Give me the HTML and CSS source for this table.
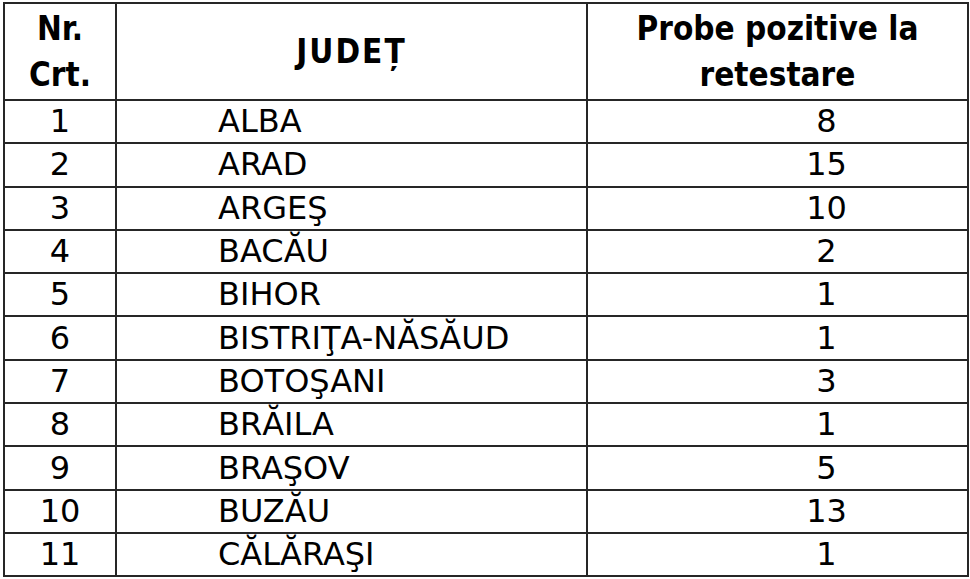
FILE: index.html
```html
<!DOCTYPE html>
<html lang="ro">
<head>
<meta charset="utf-8">
<link rel="stylesheet" href="styles.css">
</head>
<body>
<table class="tbl">
  <colgroup>
    <col class="c-nr">
    <col class="c-jud">
    <col class="c-prob">
  </colgroup>
  <thead>
    <tr class="head">
      <th class="h-nr">Nr.<br>Crt.</th>
      <th class="h-jud">JUDEȚ</th>
      <th class="h-prob">Probe pozitive la<br>retestare</th>
    </tr>
  </thead>
  <tbody>
    <tr><td class="nr">1</td><td class="jud">ALBA</td><td class="val">8</td></tr>
    <tr><td class="nr">2</td><td class="jud">ARAD</td><td class="val">15</td></tr>
    <tr><td class="nr">3</td><td class="jud">ARGEŞ</td><td class="val">10</td></tr>
    <tr><td class="nr">4</td><td class="jud">BACĂU</td><td class="val">2</td></tr>
    <tr><td class="nr">5</td><td class="jud">BIHOR</td><td class="val">1</td></tr>
    <tr><td class="nr">6</td><td class="jud">BISTRIŢA-NĂSĂUD</td><td class="val">1</td></tr>
    <tr><td class="nr">7</td><td class="jud">BOTOŞANI</td><td class="val">3</td></tr>
    <tr><td class="nr">8</td><td class="jud">BRĂILA</td><td class="val">1</td></tr>
    <tr><td class="nr">9</td><td class="jud">BRAŞOV</td><td class="val">5</td></tr>
    <tr><td class="nr">10</td><td class="jud">BUZĂU</td><td class="val">13</td></tr>
    <tr><td class="nr">11</td><td class="jud">CĂLĂRAŞI</td><td class="val">1</td></tr>
  </tbody>
</table>
</body>
</html>
```
FILE: styles.css
```css
html, body {
  margin: 0;
  padding: 0;
  background: #ffffff;
}
body {
  padding: 2px 0 0 3px;
  font-family: "DejaVu Sans", "Liberation Sans", sans-serif;
  color: #000;
}
.tbl {
  border-collapse: collapse;
  table-layout: fixed;
  width: 964px;
  border: 2px solid #262626;
}
.c-nr { width: 112px; }
.c-jud { width: 471px; }
.c-prob { width: 381px; }
.tbl th, .tbl td {
  border: 2px solid #262626;
  padding: 0;
  overflow: hidden;
  white-space: nowrap;
}
.head th {
  height: 95px;
  font-family: "DejaVu Sans Condensed", "DejaVu Sans", sans-serif;
  font-weight: bold;
  font-size: 33px;
  line-height: 46px;
  text-align: center;
  vertical-align: middle;
}
.h-jud { letter-spacing: 2px; }
.tbl td {
  height: 41.3px;
  font-size: 32px;
  line-height: 41px;
  vertical-align: middle;
}
.nr { text-align: center; }
.jud { padding-left: 101px !important; }
.val { text-align: center; padding-left: 98px !important; }
```
